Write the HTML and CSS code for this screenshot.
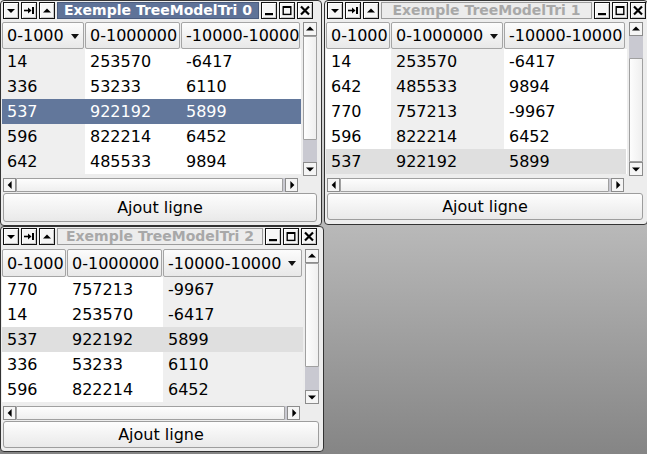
FILE: index.html
```html
<!DOCTYPE html>
<html lang="fr">
<head>
    <meta charset="UTF-8">
    <title>Exemple TreeModelTri</title>
    <link rel="stylesheet" href="styles.css">
</head>
<body>
<div class="desktop">

    <!-- Fenetre 0 (active, tri sur colonne 0) -->
    <div class="window win-0 active">
        <div class="titlebar">
            <span class="tb-btn"><svg viewBox="0 0 14 15"><polygon points="3,6 11,6 7,10"/></svg></span>
            <span class="tb-btn"><svg viewBox="0 0 14 15"><path d="M2 7.5h6" class="st"/><polygon points="6,4.5 9.5,7.5 6,10.5"/><rect x="10" y="4" width="2" height="7"/></svg></span>
            <span class="tb-btn"><svg viewBox="0 0 14 15"><polygon points="3,9.5 11,9.5 7,5.5"/></svg></span>
            <span class="title">Exemple TreeModelTri 0</span>
            <span class="tb-btn"><svg viewBox="0 0 14 15"><rect x="3" y="10" width="8" height="2.2"/></svg></span>
            <span class="tb-btn"><svg viewBox="0 0 14 15"><rect x="3.2" y="3.8" width="7.6" height="7.6" class="st box"/><rect x="3" y="3" width="8" height="2"/></svg></span>
            <span class="tb-btn"><svg viewBox="0 0 14 15"><path d="M3 3.5l8 8M11 3.5l-8 8" class="st x"/></svg></span>
        </div>
        <div class="view">
            <div class="table">
                <div class="thead">
                    <div class="th">0-1000 <i class="sort-arrow"></i></div>
                    <div class="th">0-1000000</div>
                    <div class="th">-10000-10000</div>
                </div>
                <div class="row"><div class="td sorted">14</div><div class="td">253570</div><div class="td">-6417</div></div>
                <div class="row"><div class="td sorted">336</div><div class="td">53233</div><div class="td">6110</div></div>
                <div class="row selected"><div class="td sorted">537</div><div class="td">922192</div><div class="td">5899</div></div>
                <div class="row"><div class="td sorted">596</div><div class="td">822214</div><div class="td">6452</div></div>
                <div class="row"><div class="td sorted">642</div><div class="td">485533</div><div class="td">9894</div></div>
            </div>
            <div class="vscroll">
                <span class="sb-btn up"></span>
                <span class="track"><span class="thumb"></span></span>
                <span class="sb-btn down"></span>
            </div>
            <div class="hscroll">
                <span class="sb-btn left"></span>
                <span class="hthumb"></span>
                <span class="sb-btn right"></span>
            </div>
        </div>
        <button class="add-btn">Ajout ligne</button>
    </div>

    <!-- Fenetre 1 (tri sur colonne 1) -->
    <div class="window win-1">
        <div class="titlebar">
            <span class="tb-btn"><svg viewBox="0 0 14 15"><polygon points="3,6 11,6 7,10"/></svg></span>
            <span class="tb-btn"><svg viewBox="0 0 14 15"><path d="M2 7.5h6" class="st"/><polygon points="6,4.5 9.5,7.5 6,10.5"/><rect x="10" y="4" width="2" height="7"/></svg></span>
            <span class="tb-btn"><svg viewBox="0 0 14 15"><polygon points="3,9.5 11,9.5 7,5.5"/></svg></span>
            <span class="title">Exemple TreeModelTri 1</span>
            <span class="tb-btn"><svg viewBox="0 0 14 15"><rect x="3" y="10" width="8" height="2.2"/></svg></span>
            <span class="tb-btn"><svg viewBox="0 0 14 15"><rect x="3.2" y="3.8" width="7.6" height="7.6" class="st box"/><rect x="3" y="3" width="8" height="2"/></svg></span>
            <span class="tb-btn"><svg viewBox="0 0 14 15"><path d="M3 3.5l8 8M11 3.5l-8 8" class="st x"/></svg></span>
        </div>
        <div class="view">
            <div class="table">
                <div class="thead">
                    <div class="th">0-1000</div>
                    <div class="th">0-1000000 <i class="sort-arrow"></i></div>
                    <div class="th">-10000-10000</div>
                </div>
                <div class="row"><div class="td">14</div><div class="td sorted">253570</div><div class="td">-6417</div></div>
                <div class="row"><div class="td">642</div><div class="td sorted">485533</div><div class="td">9894</div></div>
                <div class="row"><div class="td">770</div><div class="td sorted">757213</div><div class="td">-9967</div></div>
                <div class="row"><div class="td">596</div><div class="td sorted">822214</div><div class="td">6452</div></div>
                <div class="row current"><div class="td">537</div><div class="td sorted">922192</div><div class="td">5899</div></div>
            </div>
            <div class="vscroll">
                <span class="sb-btn up"></span>
                <span class="track at-bottom"><span class="thumb"></span></span>
                <span class="sb-btn down"></span>
            </div>
            <div class="hscroll">
                <span class="sb-btn left"></span>
                <span class="hthumb"></span>
                <span class="sb-btn right"></span>
            </div>
        </div>
        <button class="add-btn">Ajout ligne</button>
    </div>

    <!-- Fenetre 2 (tri sur colonne 2) -->
    <div class="window win-2">
        <div class="titlebar">
            <span class="tb-btn"><svg viewBox="0 0 14 15"><polygon points="3,6 11,6 7,10"/></svg></span>
            <span class="tb-btn"><svg viewBox="0 0 14 15"><path d="M2 7.5h6" class="st"/><polygon points="6,4.5 9.5,7.5 6,10.5"/><rect x="10" y="4" width="2" height="7"/></svg></span>
            <span class="tb-btn"><svg viewBox="0 0 14 15"><polygon points="3,9.5 11,9.5 7,5.5"/></svg></span>
            <span class="title">Exemple TreeModelTri 2</span>
            <span class="tb-btn"><svg viewBox="0 0 14 15"><rect x="3" y="10" width="8" height="2.2"/></svg></span>
            <span class="tb-btn"><svg viewBox="0 0 14 15"><rect x="3.2" y="3.8" width="7.6" height="7.6" class="st box"/><rect x="3" y="3" width="8" height="2"/></svg></span>
            <span class="tb-btn"><svg viewBox="0 0 14 15"><path d="M3 3.5l8 8M11 3.5l-8 8" class="st x"/></svg></span>
        </div>
        <div class="view">
            <div class="table">
                <div class="thead">
                    <div class="th">0-1000</div>
                    <div class="th">0-1000000</div>
                    <div class="th">-10000-10000 <i class="sort-arrow"></i></div>
                </div>
                <div class="row"><div class="td">770</div><div class="td">757213</div><div class="td sorted">-9967</div></div>
                <div class="row"><div class="td">14</div><div class="td">253570</div><div class="td sorted">-6417</div></div>
                <div class="row current"><div class="td">537</div><div class="td">922192</div><div class="td sorted">5899</div></div>
                <div class="row"><div class="td">336</div><div class="td">53233</div><div class="td sorted">6110</div></div>
                <div class="row"><div class="td">596</div><div class="td">822214</div><div class="td sorted">6452</div></div>
            </div>
            <div class="vscroll">
                <span class="sb-btn up"></span>
                <span class="track"><span class="thumb"></span></span>
                <span class="sb-btn down"></span>
            </div>
            <div class="hscroll">
                <span class="sb-btn left"></span>
                <span class="hthumb"></span>
                <span class="sb-btn right"></span>
            </div>
        </div>
        <button class="add-btn">Ajout ligne</button>
    </div>

</div>
</body>
</html>
```

FILE: styles.css
```css
* {
    margin: 0;
    padding: 0;
    box-sizing: border-box;
}

body {
    width: 647px;
    height: 454px;
    overflow: hidden;
    font-family: "DejaVu Sans", Verdana, sans-serif;
    font-size: 16px;
    color: #000;
    background: linear-gradient(to bottom, #ececec 0%, #858585 100%);
}

.desktop {
    display: grid;
    grid-template-columns: 324px 324px;
    grid-template-rows: 226px 228px;
}

/* Fenetre */
.window {
    background-color: #ededed;
    border: 1px solid #333;
    border-radius: 4px;
    padding: 1px 4px 3px 1px;
    display: flex;
    flex-direction: column;
    --cols: 83px 96px 120px;
    --hdr: 27px;
    --tgap: 3px;
}

.win-0 {
    width: 322px;
    height: 226px;
}

.win-1 {
    width: 324px;
    height: 225px;
    --cols: 65px 113px 122px;
}

.win-2 {
    width: 324px;
    height: 226px;
    --cols: 65px 96px 140px;
    --hdr: 28px;
    --tgap: 4px;
}

/* Barre de titre */
.titlebar {
    display: flex;
    gap: 2px;
    height: 17px;
    margin: 0 4px var(--tgap) 1px;
}

.win-1 .titlebar {
    margin-right: -3px;
}

.win-2 .titlebar {
    margin-right: 2px;
}

.tb-btn {
    width: 16px;
    height: 17px;
    flex: none;
    border: 1px solid #111;
    background-color: #f6f6f6;
    box-shadow: inset 1px 1px 0 #fff, inset -1px -1px 0 #c8c8c8;
}

.tb-btn svg {
    display: block;
    width: 14px;
    height: 15px;
    fill: #000;
}

.tb-btn .st {
    fill: none;
    stroke: #000;
    stroke-width: 1.6;
}

.tb-btn .box {
    stroke-width: 1.4;
}

.tb-btn .x {
    stroke-width: 2.2;
}

.title {
    flex: 1;
    height: 17px;
    border: 1px solid #9c9c9c;
    background-color: #ececec;
    color: #a8a8a8;
    font-weight: bold;
    font-size: 14px;
    line-height: 15px;
    text-align: center;
    white-space: nowrap;
    overflow: hidden;
}

.active .title {
    background-color: #5f7398;
    border-color: #4a5b7c;
    color: #fff;
}

/* Vue arborescente */
.view {
    display: grid;
    grid-template-columns: 1fr 14px;
    grid-template-rows: calc(var(--hdr) + 127px) 14px;
    gap: 2px;
}

.table {
    background-color: #fff;
    height: calc(var(--hdr) + 125px);
}

.thead,
.row {
    display: grid;
    grid-template-columns: var(--cols);
}

.thead {
    height: var(--hdr);
    background-color: #ededed;
}

.th {
    display: flex;
    align-items: center;
    gap: 7px;
    margin-right: 1px;
    padding-left: 4px;
    border: 1px solid #a5a5a5;
    border-radius: 2px;
    background: linear-gradient(to bottom, #fcfcfc, #e8e8e8);
    white-space: nowrap;
    overflow: hidden;
}

.sort-arrow {
    width: 0;
    height: 0;
    margin-top: 1px;
    border-left: 4px solid transparent;
    border-right: 4px solid transparent;
    border-top: 5px solid #111;
}

.row {
    height: 25px;
    line-height: 26px;
}

.td {
    padding-left: 5px;
    white-space: nowrap;
    overflow: hidden;
}

.td.sorted {
    background-color: #efefef;
}

.row.selected .td {
    background-color: #62779b;
    color: #fff;
}

.row.current .td {
    background-color: #dfdfdf;
}

/* Barres de defilement */
.vscroll {
    display: flex;
    flex-direction: column;
    height: calc(var(--hdr) + 127px);
    background-color: #c9c9d1;
}

.track {
    flex: 1;
    display: flex;
    flex-direction: column;
}

.track.at-bottom {
    justify-content: flex-end;
}

.thumb {
    height: 104px;
    border: 1px solid #a0a0a0;
    border-radius: 1px;
    background: linear-gradient(to right, #fdfdfd, #efefef);
}

.hscroll {
    display: flex;
    margin: 0 3px 0 1px;
    background-color: #c9c9d1;
}

.hthumb {
    flex: 1;
    margin-right: 2px;
    border: 1px solid #a0a0a0;
    border-radius: 1px;
    background: linear-gradient(to bottom, #fdfdfd, #efefef);
}

.sb-btn {
    position: relative;
    flex: none;
    width: 14px;
    height: 14px;
    border: 1px solid #8c8c8c;
    background-color: #f5f5f5;
}

.hscroll .sb-btn {
    width: 13px;
}

.sb-btn::after {
    content: "";
    position: absolute;
    left: 50%;
    top: 50%;
    width: 0;
    height: 0;
}

.sb-btn.up::after {
    transform: translate(-50%, -60%);
    border-left: 4px solid transparent;
    border-right: 4px solid transparent;
    border-bottom: 4px solid #000;
}

.sb-btn.down::after {
    transform: translate(-50%, -40%);
    border-left: 4px solid transparent;
    border-right: 4px solid transparent;
    border-top: 4px solid #000;
}

.sb-btn.left::after {
    transform: translate(-60%, -50%);
    border-top: 4px solid transparent;
    border-bottom: 4px solid transparent;
    border-right: 4px solid #000;
}

.sb-btn.right::after {
    transform: translate(-40%, -50%);
    border-top: 4px solid transparent;
    border-bottom: 4px solid transparent;
    border-left: 4px solid #000;
}

/* Bouton */
.add-btn {
    height: 29px;
    margin: 1px 0 0 1px;
    border: 1px solid #9d9d9d;
    border-radius: 3px;
    background: linear-gradient(to bottom, #fdfdfd, #e9e9e9);
    font-family: "DejaVu Sans", Verdana, sans-serif;
    font-size: 16px;
    color: #000;
}

.win-1 .add-btn {
    height: 27px;
}
```
